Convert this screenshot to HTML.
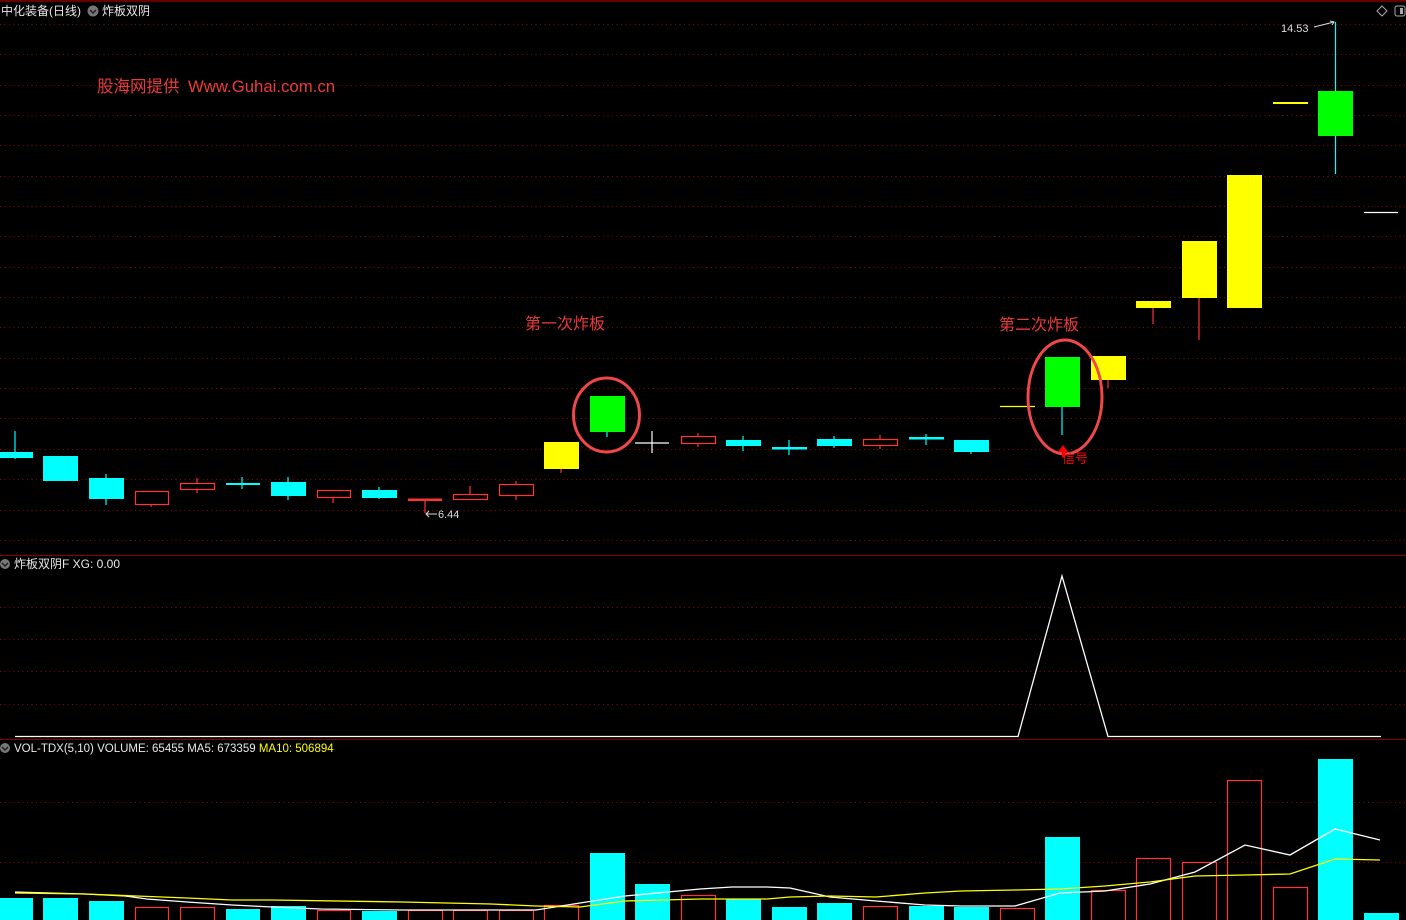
<!DOCTYPE html>
<html><head><meta charset="utf-8"><style>
html,body{margin:0;padding:0;background:#000;width:1406px;height:920px;overflow:hidden}
svg{display:block}
text{font-family:"Liberation Sans","Noto Sans CJK SC",sans-serif}
</style></head><body>
<svg width="1406" height="920" viewBox="0 0 1406 920" xmlns="http://www.w3.org/2000/svg">
<rect width="1406" height="920" fill="#000"/>
<line x1="0" y1="1" x2="1406" y2="1" stroke="#8a0000" stroke-width="1.5"/>
<g stroke="#9a0000" stroke-width="1" stroke-dasharray="1,3.5">
<line x1="0" y1="24.5" x2="1406" y2="24.5"/><line x1="0" y1="54.5" x2="1406" y2="54.5"/><line x1="0" y1="85.5" x2="1406" y2="85.5"/>
<line x1="0" y1="115.5" x2="1406" y2="115.5"/><line x1="0" y1="145.5" x2="1406" y2="145.5"/><line x1="0" y1="176.5" x2="1406" y2="176.5"/>
<line x1="0" y1="206.5" x2="1406" y2="206.5"/><line x1="0" y1="236.5" x2="1406" y2="236.5"/><line x1="0" y1="267.5" x2="1406" y2="267.5"/>
<line x1="0" y1="297.5" x2="1406" y2="297.5"/><line x1="0" y1="327.5" x2="1406" y2="327.5"/><line x1="0" y1="358.5" x2="1406" y2="358.5"/>
<line x1="0" y1="388.5" x2="1406" y2="388.5"/><line x1="0" y1="418.5" x2="1406" y2="418.5"/><line x1="0" y1="449.5" x2="1406" y2="449.5"/>
<line x1="0" y1="479.5" x2="1406" y2="479.5"/><line x1="0" y1="510.5" x2="1406" y2="510.5"/><line x1="0" y1="540.5" x2="1406" y2="540.5"/>
<line x1="0" y1="607.5" x2="1406" y2="607.5"/><line x1="0" y1="639.5" x2="1406" y2="639.5"/><line x1="0" y1="671.5" x2="1406" y2="671.5"/><line x1="0" y1="704.5" x2="1406" y2="704.5"/>
<line x1="0" y1="802.5" x2="1406" y2="802.5"/><line x1="0" y1="862.5" x2="1406" y2="862.5"/>
</g>
<line x1="0" y1="555.5" x2="1406" y2="555.5" stroke="#8a0000"/>
<line x1="0" y1="739.5" x2="1406" y2="739.5" stroke="#8a0000"/>

<text x="1" y="15" font-size="12" fill="#e8e8e8">中化装备(日线)</text>
<circle cx="93" cy="11" r="5.5" fill="#777"/><path d="M90 10l3 3 3-3" stroke="#222" stroke-width="1.5" fill="none"/>
<text x="102" y="15" font-size="12" fill="#e8e8e8">炸板双阴</text>
<path d="M1382 6l5 5-5 5-5-5z" stroke="#aaa" fill="none"/>
<rect x="1395" y="6" width="10" height="10" rx="2" stroke="#aaa" fill="none"/><rect x="1400" y="8" width="3" height="6" fill="#aaa"/>
<text x="97" y="92" font-size="16.5" fill="#e83c3c">股海网提供</text>
<text x="188" y="92" font-size="16.5" fill="#e83c3c" textLength="147" lengthAdjust="spacingAndGlyphs">Www.Guhai.com.cn</text>
<text x="525" y="329" font-size="16" fill="#e83c3c">第一次炸板</text>
<text x="999" y="330" font-size="16" fill="#e83c3c">第二次炸板</text>

<g stroke-width="1.2">
<line x1="15" y1="431" x2="15" y2="459" stroke="#0ff"/><rect x="0" y="452" width="33" height="6" fill="#0ff"/>
<rect x="43" y="456" width="35" height="25" fill="#0ff"/>
<line x1="106" y1="474" x2="106" y2="505" stroke="#0ff"/><rect x="89" y="478" width="35" height="21" fill="#0ff"/>
<line x1="151" y1="504" x2="151" y2="507" stroke="#f33"/><rect x="135.5" y="491.5" width="33" height="13" fill="none" stroke="#f33"/>
<line x1="197" y1="478" x2="197" y2="493" stroke="#f33"/><rect x="180.5" y="483.5" width="34" height="6" fill="#000" stroke="#f33"/>
<line x1="242" y1="477" x2="242" y2="489" stroke="#0ff"/><rect x="226" y="483" width="34" height="2" fill="#0ff"/>
<line x1="288" y1="477" x2="288" y2="500" stroke="#0ff"/><rect x="271" y="482" width="35" height="14" fill="#0ff"/>
<line x1="333" y1="497" x2="333" y2="503" stroke="#f33"/><rect x="317.5" y="490.5" width="33" height="7" fill="none" stroke="#f33"/>
<line x1="379" y1="487" x2="379" y2="499" stroke="#0ff"/><rect x="362" y="490" width="35" height="8" fill="#0ff"/>
<line x1="425" y1="500" x2="425" y2="513" stroke="#f33"/><rect x="408" y="498.5" width="34" height="2.5" fill="#f33"/>
<line x1="470" y1="486" x2="470" y2="494" stroke="#f33"/><rect x="453.5" y="494.5" width="34" height="5" fill="none" stroke="#f33"/>
<line x1="516" y1="481" x2="516" y2="500" stroke="#f33"/><rect x="499.5" y="484.5" width="34" height="11" fill="#000" stroke="#f33"/>
<line x1="561" y1="468" x2="561" y2="473" stroke="#f33"/><rect x="544" y="442" width="35" height="27" fill="#ff0"/>
<line x1="607" y1="432" x2="607" y2="437" stroke="#0ff"/><rect x="590" y="396" width="35" height="36" fill="#0f0"/>
<line x1="652" y1="431" x2="652" y2="453" stroke="#fff"/><line x1="635" y1="443" x2="669" y2="443" stroke="#fff"/>
<line x1="698" y1="433" x2="698" y2="447" stroke="#f33"/><rect x="681.5" y="436.5" width="34" height="7" fill="#000" stroke="#f33"/>
<line x1="743" y1="436" x2="743" y2="451" stroke="#0ff"/><rect x="726" y="440" width="35" height="6" fill="#0ff"/>
<line x1="789" y1="440" x2="789" y2="455" stroke="#0ff"/><rect x="772" y="447" width="35" height="2.5" fill="#0ff"/>
<line x1="834" y1="436" x2="834" y2="448" stroke="#0ff"/><rect x="817" y="439" width="35" height="7" fill="#0ff"/>
<line x1="880" y1="435" x2="880" y2="449" stroke="#f33"/><rect x="863.5" y="439.5" width="34" height="6" fill="#000" stroke="#f33"/>
<line x1="926" y1="434" x2="926" y2="445" stroke="#0ff"/><rect x="909" y="437" width="35" height="2.5" fill="#0ff"/>
<line x1="971" y1="450" x2="971" y2="454" stroke="#0ff"/><rect x="954" y="440" width="35" height="12" fill="#0ff"/>
<line x1="1000" y1="406.5" x2="1035" y2="406.5" stroke="#ff0"/>
<line x1="1062" y1="407" x2="1062" y2="435" stroke="#0ff"/><rect x="1045" y="357" width="35" height="50" fill="#0f0"/>
<line x1="1108" y1="379" x2="1108" y2="388" stroke="#f33"/><rect x="1091" y="356" width="35" height="24" fill="#ff0"/>
<line x1="1153" y1="307" x2="1153" y2="324" stroke="#f33"/><rect x="1136" y="301" width="35" height="7" fill="#ff0"/>
<line x1="1199" y1="297" x2="1199" y2="340" stroke="#f33"/><rect x="1182" y="241" width="35" height="57" fill="#ff0"/>
<rect x="1227" y="175" width="35" height="133" fill="#ff0"/>
<rect x="1273" y="102" width="35" height="2" fill="#ff0"/>
<line x1="1335.5" y1="22" x2="1335.5" y2="174" stroke="#0ff"/><rect x="1318" y="91" width="35" height="45" fill="#0f0"/>
<line x1="1364" y1="212.5" x2="1398" y2="212.5" stroke="#fff"/>
</g>
<text x="1281" y="32" font-size="11" fill="#ddd">14.53</text>
<path d="M1314 27l20-5m-4-1l4 1-2 3" stroke="#ddd" fill="none"/>
<path d="M426 514h11m-8-3l-3 3 3 3" stroke="#ddd" fill="none"/>
<text x="438" y="518" font-size="11" fill="#ddd">6.44</text>
<ellipse cx="606.5" cy="415" rx="33" ry="37" fill="none" stroke="#f04848" stroke-width="3"/>
<ellipse cx="1065" cy="397" rx="37" ry="57" fill="none" stroke="#f04848" stroke-width="3"/>
<path d="M1063 445l-5 7h10z" fill="#f00"/><rect x="1062" y="451" width="3" height="6" fill="#f00"/>
<text x="1062" y="463" font-size="13" fill="#f00">信号</text>

<circle cx="5" cy="564" r="5" fill="#777"/><path d="M2 563l3 3 3-3" stroke="#222" stroke-width="1.5" fill="none"/>
<text x="14" y="568" font-size="12" fill="#e8e8e8">炸板双阴F  XG: 0.00</text>
<polyline points="15,736.5 1018,736.5 1062,576 1108,736.5 1381,736.5" fill="none" stroke="#fff" stroke-width="1.3"/>

<circle cx="5" cy="748" r="5" fill="#777"/><path d="M2 747l3 3 3-3" stroke="#222" stroke-width="1.5" fill="none"/>
<text x="14" y="752" font-size="11.5" fill="#e8e8e8">VOL-TDX(5,10) VOLUME: 65455 MA5: 673359 <tspan fill="#ff0">MA10: 506894</tspan></text>
<g fill="#0ff">
<rect x="0" y="898" width="33" height="22"/><rect x="43" y="898" width="35" height="22"/><rect x="89" y="901" width="35" height="19"/>
<rect x="226" y="909" width="34" height="11"/><rect x="271" y="906" width="35" height="14"/><rect x="362" y="911" width="35" height="9"/>
<rect x="590" y="853" width="35" height="67"/><rect x="635" y="884" width="35" height="36"/><rect x="726" y="899" width="35" height="21"/>
<rect x="772" y="907" width="35" height="13"/><rect x="817" y="903" width="35" height="17"/><rect x="909" y="906" width="35" height="14"/>
<rect x="954" y="907" width="35" height="13"/><rect x="1045" y="837" width="35" height="83"/><rect x="1318" y="759" width="35" height="161"/>
<rect x="1364" y="913" width="35" height="7"/>
</g>
<g fill="none" stroke="#f33" stroke-width="1.2">
<rect x="135.5" y="907.5" width="33" height="14"/><rect x="180.5" y="907.5" width="34" height="14"/><rect x="317.5" y="910.5" width="33" height="12"/>
<rect x="408.5" y="910.5" width="34" height="12"/><rect x="453.5" y="910.5" width="34" height="12"/><rect x="499.5" y="910.5" width="34" height="12"/>
<rect x="544.5" y="905.5" width="34" height="16"/><rect x="681.5" y="895.5" width="34" height="26"/><rect x="863.5" y="906.5" width="34" height="16"/>
<rect x="1000.5" y="908.5" width="34" height="14"/><rect x="1091.5" y="890.5" width="34" height="32"/><rect x="1136.5" y="858.5" width="34" height="64"/>
<rect x="1182.5" y="862.5" width="34" height="60"/><rect x="1227.5" y="780.5" width="34" height="142"/><rect x="1273.5" y="887.5" width="34" height="35"/>
</g>
<polyline fill="none" stroke="#fff" stroke-width="1.3" points="15,892 85,894 125,896 147,899 187,902 232,905 272,907 321,909 402,910 491,910 536,910 580,903 625,896 700,889 732,887 767,887 790,888 830,897 876,901 925,905 961,906 1015,906 1060,893 1105,891 1150,884 1195,872 1245,845 1290,855 1335,829 1380,840"/>
<polyline fill="none" stroke="#ff0" stroke-width="1.3" points="15,893 85,894 187,898 232,900 272,900 402,902 491,904 536,906 580,907 625,901 700,899 767,899 790,897 830,896 876,897 925,893 961,891 1015,890 1060,889 1105,886 1150,882 1195,876 1245,875 1290,874 1335,859 1380,860"/>
</svg>
</body></html>
